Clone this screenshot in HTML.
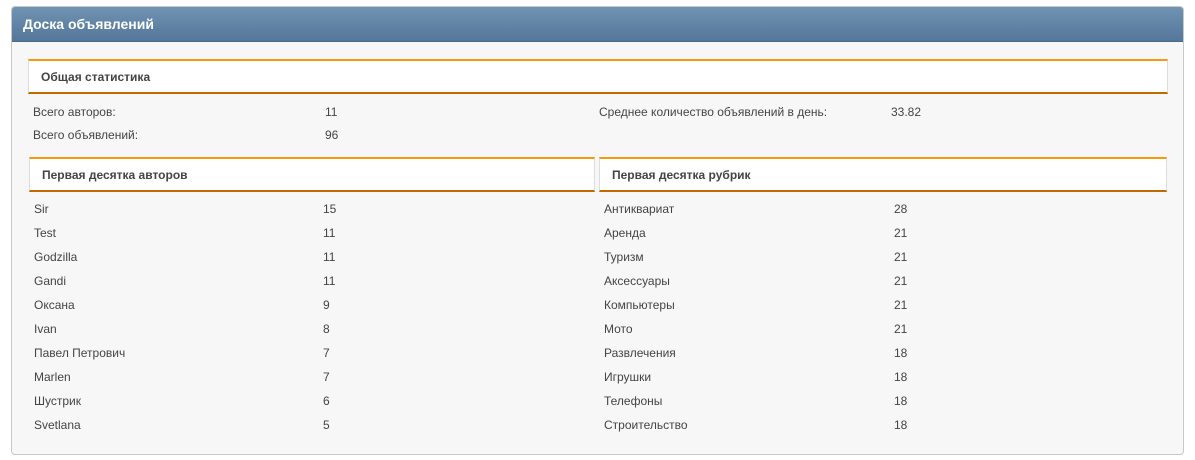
<!DOCTYPE html><html><head><meta charset="utf-8"><style>
body{margin:0;background:#fff;width:1195px;height:460px;font-family:"Liberation Sans","DejaVu Sans",sans-serif;color:#444;font-size:12px}
.box{position:absolute;left:11px;top:6px;width:1171px;height:447px;border:1px solid #c8c8c8;border-radius:4px;background:#f7f7f7;overflow:hidden}
.hd{height:34px;background:linear-gradient(#7093b3,#54779a);color:#fff;font-weight:bold;font-size:14px;line-height:35px;padding-left:11px;border-bottom:1px solid #4a6a8a}
.sh{position:absolute;background:#fff;border-top:2px solid #f59a0c;border-bottom:2px solid #c06a00;border-left:1px solid #ddd;border-right:1px solid #ddd;font-weight:bold;font-size:12px;color:#444;box-sizing:border-box}
.t{position:absolute;white-space:nowrap}
</style></head><body><div class="box"><div class="hd">Доска объявлений</div></div>
<div class="sh" style="left:28px;top:59px;width:1140px;height:35px;line-height:33px;padding-left:12px">Общая статистика</div>
<div class="t" style="left:33px;top:105px">Всего авторов:</div><div class="t" style="left:325px;top:105px">11</div>
<div class="t" style="left:33px;top:128px">Всего объявлений:</div><div class="t" style="left:325px;top:128px">96</div>
<div class="t" style="left:599px;top:105px">Среднее количество объявлений в день:</div><div class="t" style="left:891px;top:105px">33.82</div>
<div class="sh" style="left:29px;top:157px;width:566px;height:35px;line-height:33px;padding-left:12px">Первая десятка авторов</div>
<div class="sh" style="left:599px;top:157px;width:568px;height:35px;line-height:33px;padding-left:12px">Первая десятка рубрик</div>
<div id="r"></div>
<script>
var L=[["Sir",15],["Test",11],["Godzilla",11],["Gandi",11],["Оксана",9],["Ivan",8],["Павел Петрович",7],["Marlen",7],["Шустрик",6],["Svetlana",5]];
var R=[["Антиквариат",28],["Аренда",21],["Туризм",21],["Аксессуары",21],["Компьютеры",21],["Мото",21],["Развлечения",18],["Игрушки",18],["Телефоны",18],["Строительство",18]];
var h="";for(var i=0;i<10;i++){var y=202+i*24;
h+='<div class="t" style="left:34px;top:'+y+'px">'+L[i][0]+'</div><div class="t" style="left:323px;top:'+y+'px">'+L[i][1]+'</div>';
h+='<div class="t" style="left:604px;top:'+y+'px">'+R[i][0]+'</div><div class="t" style="left:894px;top:'+y+'px">'+R[i][1]+'</div>';}
document.getElementById("r").innerHTML=h;
</script></body></html>
